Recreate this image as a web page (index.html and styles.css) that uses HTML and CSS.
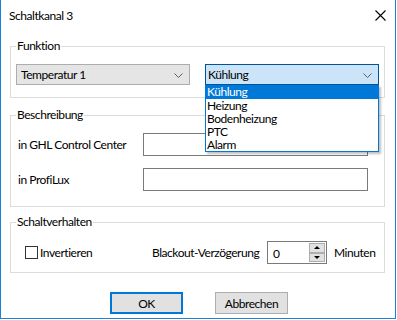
FILE: index.html
```html
<!DOCTYPE html>
<html lang="de">
<head>
  <meta charset="UTF-8">
  <title>Schaltkanal 3</title>
  <link rel="stylesheet" href="styles.css">
</head>
<body>
  <div class="window">
    <div class="titlebar">
      <span class="title">Schaltkanal 3</span>
      <svg class="close" width="11" height="11" viewBox="0 0 11 11">
        <path d="M0.5 0.5 L10.5 10.5 M10.5 0.5 L0.5 10.5" stroke="#000" stroke-width="1.1" fill="none"/>
      </svg>
    </div>

    <fieldset class="group group-funktion">
      <legend>Funktion</legend>
      <div class="combo-row">
        <div class="combo">
          <span>Temperatur 1</span>
          <svg class="chev" width="9" height="5" viewBox="0 0 9 5"><path d="M0.5 0.5 L4.5 4.5 L8.5 0.5" stroke="#606060" fill="none"/></svg>
        </div>
        <div class="combo-wrap">
          <div class="combo combo-active">
            <span>Kühlung</span>
            <svg class="chev" width="9" height="5" viewBox="0 0 9 5"><path d="M0.5 0.5 L4.5 4.5 L8.5 0.5" stroke="#606060" fill="none"/></svg>
          </div>
          <ul class="dropdown">
            <li class="selected">Kühlung</li>
            <li>Heizung</li>
            <li>Bodenheizung</li>
            <li>PTC</li>
            <li>Alarm</li>
          </ul>
        </div>
      </div>
    </fieldset>

    <fieldset class="group group-beschreibung">
      <legend>Beschreibung</legend>
      <div class="field-grid">
        <label>in GHL Control Center</label>
        <div class="textbox"></div>
        <label>in ProfiLux</label>
        <div class="textbox"></div>
      </div>
    </fieldset>

    <fieldset class="group group-schalt">
      <legend>Schaltverhalten</legend>
      <div class="schalt-row">
        <div class="check">
          <span class="box"></span>
          <span>Invertieren</span>
        </div>
        <span class="blackout">Blackout-Verzögerung</span>
        <div class="spin">
          <span class="spin-value">0</span>
          <div class="spin-buttons">
            <div class="spin-btn"><span class="tri-up"></span></div>
            <div class="spin-btn"><span class="tri-down"></span></div>
          </div>
        </div>
        <span class="unit">Minuten</span>
      </div>
    </fieldset>

    <div class="buttons">
      <button class="btn btn-default">OK</button>
      <button class="btn">Abbrechen</button>
    </div>
  </div>
</body>
</html>
```

FILE: styles.css
```css
body {
  margin: 0;
  background: #fff;
  font-family: Lato, "Noto Sans", sans-serif;
  font-size: 12px;
  letter-spacing: -0.45px;
  color: #000;
}
.window {
  box-sizing: border-box;
  width: 396px;
  height: 319px;
  border: 1px solid #1883d7;
  border-top: none;
  background: #fff;
  white-space: nowrap;
}
.titlebar {
  height: 38px;
  display: flex;
  align-items: flex-start;
  justify-content: space-between;
  padding: 0 9px 0 8px;
}
.title {
  margin-top: 7px;
  line-height: 17px;
}
.close {
  margin-top: 10px;
}
.group {
  margin: 0 0 0 9px;
  width: 375px;
  box-sizing: border-box;
  border: 1px solid #dcdcdc;
  padding: 0 5px;
  min-width: 0;
}
.group legend {
  padding: 0 1px;
  line-height: 16px;
}
.group-funktion {
  padding-top: 10px;
  padding-bottom: 12px;
}
.group-beschreibung {
  margin-top: 9px;
  padding-top: 10px;
  padding-bottom: 15px;
}
.group-schalt {
  margin-top: 7px;
  padding-top: 11px;
  padding-bottom: 8px;
}

/* combos */
.combo-row {
  display: flex;
  gap: 15px;
}
.combo-wrap {
  position: relative;
}
.combo {
  box-sizing: border-box;
  width: 174px;
  height: 21px;
  border: 1px solid #adadad;
  background: #e5e5e5;
  display: flex;
  align-items: center;
  justify-content: space-between;
  padding: 0 6px 0 4px;
}
.combo-active {
  background: #cce4f7;
  border-color: #005499;
  padding-left: 2px;
}
.chev {
  margin-top: 1px;
}
.dropdown {
  position: absolute;
  left: 0;
  top: 21px;
  z-index: 2;
  box-sizing: border-box;
  width: 174px;
  margin: 0;
  padding: 0;
  list-style: none;
  background: #fff;
  border: 1px solid #0078d7;
  border-top: none;
  box-shadow: 2px 2px 2px rgba(0, 0, 0, 0.25);
}
.dropdown li {
  height: 13px;
  line-height: 13px;
  padding-left: 1px;
}
.dropdown li.selected {
  background: #0078d7;
  color: #fff;
  height: 14px;
}

/* beschreibung */
.field-grid {
  display: grid;
  grid-template-columns: 127px 225px;
  row-gap: 12px;
  align-items: center;
}
.field-grid label {
  padding-left: 2px;
}
.textbox {
  box-sizing: border-box;
  height: 23px;
  border: 1px solid #7a7a7a;
  background: #fff;
}

/* schaltverhalten */
.schalt-row {
  display: flex;
  align-items: center;
  height: 23px;
}
.check {
  display: flex;
  align-items: center;
  margin-left: 9px;
  width: 127px;
  flex: none;
}
.box {
  box-sizing: border-box;
  width: 13px;
  height: 13px;
  border: 1px solid #333;
  margin-right: 2px;
  background: #fff;
}
.blackout {
  width: 115px;
  flex: none;
}
.spin {
  box-sizing: border-box;
  width: 60px;
  height: 23px;
  flex: none;
  border: 1px solid #7a7a7a;
  display: flex;
  justify-content: space-between;
  padding: 1px;
}
.spin-value {
  padding-left: 4px;
  line-height: 21px;
}
.spin-buttons {
  display: flex;
  flex-direction: column;
  width: 16px;
}
.spin-btn {
  flex: 1;
  box-sizing: border-box;
  border: 1px solid #adadad;
  background: #e1e1e1;
  display: flex;
  align-items: center;
  justify-content: center;
}
.tri-up {
  width: 0;
  height: 0;
  border-left: 3px solid transparent;
  border-right: 3px solid transparent;
  border-bottom: 3px solid #000;
}
.tri-down {
  width: 0;
  height: 0;
  border-left: 3px solid transparent;
  border-right: 3px solid transparent;
  border-top: 3px solid #000;
}
.unit {
  margin-left: 7px;
}

/* buttons */
.buttons {
  display: flex;
  gap: 32px;
  margin-top: 19px;
  padding-left: 109px;
}
.btn {
  box-sizing: border-box;
  width: 73px;
  height: 22px;
  font: inherit;
  letter-spacing: inherit;
  color: #000;
  background: #e1e1e1;
  border: 1px solid #adadad;
  padding: 0;
}
.btn-default {
  border: 2px solid #0078d7;
}
```
